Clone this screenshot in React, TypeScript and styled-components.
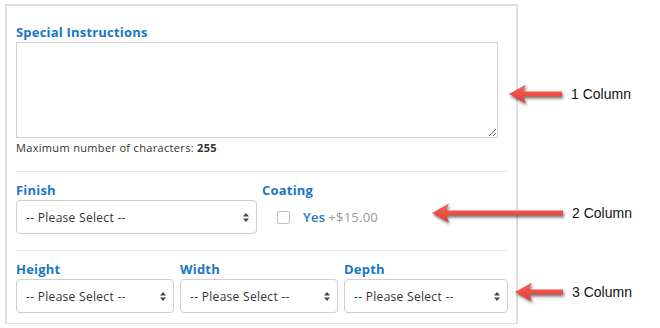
import React from "react";
import styled, { createGlobalStyle } from "styled-components";

const Global = createGlobalStyle`
  html, body { margin: 0; padding: 0; background: #fff; }
  body { font-family: "Open Sans", "Noto Sans", sans-serif; color: #333; }
`;

const Page = styled.div`
  position: relative;
  width: 660px;
  height: 328px;
  padding: 4px 0 0 5px;
  box-sizing: border-box;
`;

const Panel = styled.div`
  width: 513px;
  box-sizing: border-box;
  border: 2px solid #dedede;
  border-bottom-width: 1px;
  padding: 18px 8px 10px 9px;
`;

const Label = styled.div`
  font-family: "Open Sans", sans-serif;
  font-weight: 700;
  font-size: 13px;
  line-height: 16px;
  letter-spacing: 0.2px;
  color: #1877c5;
  margin-bottom: 2px;
  white-space: nowrap;
`;

const TextArea = styled.textarea`
  display: block;
  width: 482px;
  height: 96px;
  box-sizing: border-box;
  margin: 0;
  border: 1px solid #d2d2d2;
  border-radius: 0;
  resize: both;
  outline: none;
`;

const Help = styled.div`
  margin-top: 3px;
  font-size: 11px;
  line-height: 14px;
  letter-spacing: 0.33px;
  color: #333;
  b { font-weight: 700; }
`;

const Divider = styled.div<{ $top: number }>`
  height: 0;
  border-top: 1px solid #e8e8e8;
  margin: ${(p) => p.$top}px 0 0 0;
`;

const Row = styled.div<{ $cols: number }>`
  display: grid;
  grid-template-columns: repeat(${(p) => p.$cols}, 1fr);
  padding-top: 10px;
`;

const Col = styled.div<{ $pad: number }>`
  padding-right: ${(p) => p.$pad}px;
  min-width: 0;
`;

const SelectWrap = styled.div`
  position: relative;
  height: 34px;
`;

const Select = styled.select`
  appearance: none;
  -webkit-appearance: none;
  width: 100%;
  height: 34px;
  box-sizing: border-box;
  border: 1px solid #cfcfcf;
  border-radius: 4px;
  background: #fff;
  padding: 0 24px 0 9px;
  font-family: "Open Sans", sans-serif;
  font-size: 12px;
  letter-spacing: 0.3px;
  color: #333;
  outline: none;
`;

const Caret = styled.svg`
  position: absolute;
  right: 8px;
  top: 13px;
  pointer-events: none;
`;

const CheckRow = styled.div`
  display: flex;
  align-items: center;
  padding: 9px 0 0 15px;
  font-size: 13px;
  line-height: 16px;
  letter-spacing: 0.25px;
`;

const Box = styled.span`
  width: 11px;
  height: 11px;
  border: 1px solid #bdbdbd;
  border-radius: 2px;
  background: #fff;
  margin-right: 13px;
`;

const Yes = styled.span`
  color: #1877c5;
  font-weight: 600;
`;

const Price = styled.span`
  color: #9a9a9a;
  margin-left: 3px;
`;

const Note = styled.div<{ $x: number; $y: number }>`
  position: absolute;
  left: ${(p) => p.$x}px;
  top: ${(p) => p.$y}px;
  display: flex;
  align-items: center;
`;

const NoteText = styled.span`
  font-family: "Liberation Sans", Arial, sans-serif;
  font-size: 14px;
  line-height: 16px;
  color: #111;
  margin-left: 9px;
`;

const ArrowSvg = styled.svg`
  display: block;
  overflow: visible;
  filter: drop-shadow(1.5px 2px 1.5px rgba(0, 0, 0, 0.55));
`;

const Arrow = ({ length }: { length: number }) => (
  <ArrowSvg width={length} height={20} viewBox={`0 0 ${length} 20`}>
    <defs>
      <linearGradient id={`g${length}`} x1="0" y1="0" x2="0" y2="1">
        <stop offset="0" stopColor="#f5655a" />
        <stop offset="1" stopColor="#e5392f" />
      </linearGradient>
    </defs>
    <path
      d={`M0 10 L17 0.5 L14 7.6 L${length} 7.6 L${length} 12.4 L14 12.4 L17 19.5 Z`}
      fill={`url(#g${length})`}
    />
  </ArrowSvg>
);

const Updown = () => (
  <Caret width="6" height="9" viewBox="0 0 6 9">
    <path d="M3 0 L6 3.5 L0 3.5 Z M3 9 L6 5.5 L0 5.5 Z" fill="#444" />
  </Caret>
);

const Dropdown = () => (
  <SelectWrap>
    <Select defaultValue="">
      <option value="">-- Please Select --</option>
    </Select>
    <Updown />
  </SelectWrap>
);

export default function App() {
  return (
    <Page>
      <Global />
      <Panel>
        <Label>Special Instructions</Label>
        <TextArea />
        <Help>
          Maximum number of characters: <b>255</b>
        </Help>
        <Divider $top={16} />
        <Row $cols={2}>
          <Col $pad={5}>
            <Label>Finish</Label>
            <Dropdown />
          </Col>
          <Col $pad={0}>
            <Label>Coating</Label>
            <CheckRow>
              <Box />
              <Yes>Yes</Yes>
              <Price>+$15.00</Price>
            </CheckRow>
          </Col>
        </Row>
        <Divider $top={16} />
        <Row $cols={3}>
          <Col $pad={6}>
            <Label>Height</Label>
            <Dropdown />
          </Col>
          <Col $pad={6}>
            <Label>Width</Label>
            <Dropdown />
          </Col>
          <Col $pad={0}>
            <Label>Depth</Label>
            <Dropdown />
          </Col>
        </Row>
      </Panel>
      <Note $x={509} $y={84}>
        <Arrow length={53} />
        <NoteText>1 Column</NoteText>
      </Note>
      <Note $x={432} $y={203}>
        <Arrow length={131} />
        <NoteText>2 Column</NoteText>
      </Note>
      <Note $x={515} $y={282}>
        <Arrow length={48} />
        <NoteText>3 Column</NoteText>
      </Note>
    </Page>
  );
}
